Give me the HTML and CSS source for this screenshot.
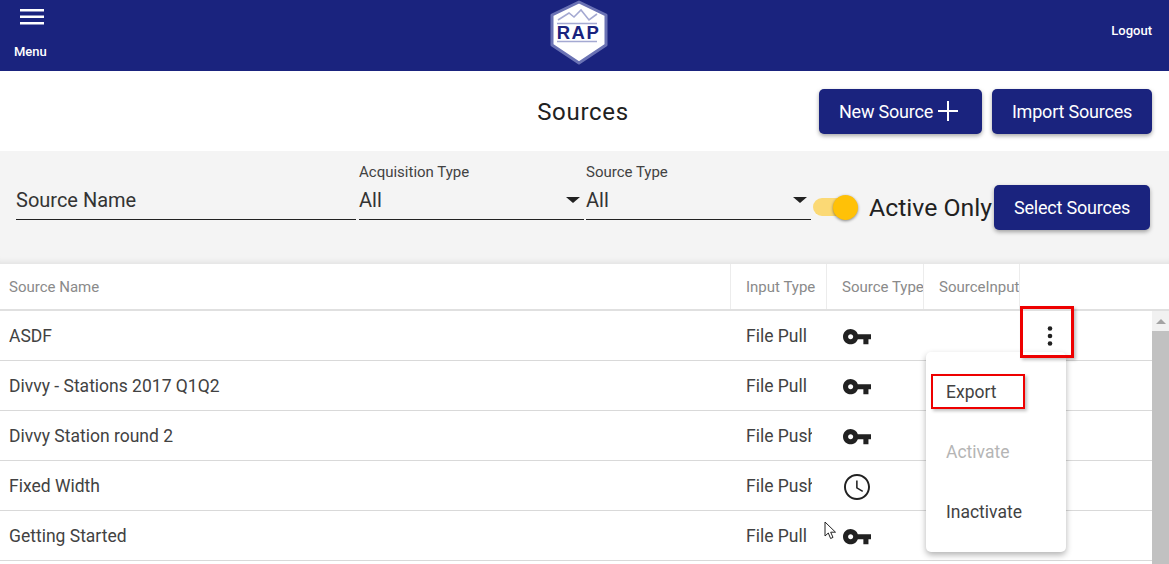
FILE: index.html
```html
<!DOCTYPE html>
<html lang="en">
<head>
    <meta charset="UTF-8">
    <meta name="viewport" content="width=device-width, initial-scale=1.0">
    <title>Sources</title>
    <link rel="stylesheet" href="styles.css">
</head>
<body>
    <header class="topbar">
        <div class="menu-btn">
            <svg class="menu-icon" width="24" height="16" viewBox="0 0 24 16"><path d="M0 0h24v2.500H0zM0 6.500h24V9H0zM0 13h24v2.500H0z" fill="#fff"/></svg>
            <span>Menu</span>
        </div>
        <svg class="logo" width="60" height="66" viewBox="0 0 60 66">
            <path d="M30 2 L57 15 V45 L30 63 L3 45 V15 Z" fill="#fff" stroke="#6a72b4" stroke-width="3" stroke-linejoin="round"/>
            <path d="M9 20 L20 13 L25 17 L32 10 L40 20 L48 14" fill="none" stroke="#a4a9d2" stroke-width="1.6"/>
            <path d="M8 23.500H48M8 41.500H48" stroke="#a4a9d2" stroke-width="1.6"/>
            <text x="29.500" y="38.500" text-anchor="middle" class="logo-text">RAP</text>
        </svg>
        <div class="logout">Logout</div>
    </header>

    <div class="title-row">
        <div></div>
        <h1>Sources</h1>
        <div class="title-actions">
            <button class="btn btn-new">New Source
                <svg width="22" height="22" viewBox="0 0 22 22"><path d="M10 1h2v20h-2zM1 10h20v2H1z" fill="#fff"/></svg>
            </button>
            <button class="btn btn-import">Import Sources</button>
        </div>
    </div>

    <section class="filters">
        <div class="field field-name">
            <div class="field-value">Source Name</div>
        </div>
        <div class="field field-select">
            <label>Acquisition Type</label>
            <div class="field-value">All<i class="caret"></i></div>
        </div>
        <div class="field field-select">
            <label>Source Type</label>
            <div class="field-value">All<i class="caret"></i></div>
        </div>
        <div class="switch"><span class="switch-track"></span><span class="switch-thumb"></span></div>
        <span class="switch-label">Active Only</span>
        <button class="btn btn-select">Select Sources</button>
    </section>

    <section class="grid">
        <div class="grid-head">
            <div class="cell col-name">Source Name</div>
            <div class="cell col-input">Input Type</div>
            <div class="cell col-type">Source Type</div>
            <div class="cell col-si">SourceInput</div>
        </div>
        <div class="grid-main">
            <div class="rows">
                <div class="row">
                    <div class="cell col-name">ASDF</div>
                    <div class="cell col-input"><span class="clip">File Pull</span></div>
                    <div class="cell col-type"><svg class="key" width="28" height="16" viewBox="1 6 22 12.500"><path d="M12.650 10C11.830 7.670 9.610 6 7 6c-3.310 0-6 2.690-6 6s2.690 6 6 6c2.610 0 4.830-1.670 5.650-4H17v4h4v-4h2v-4H12.650zM7 14c-1.100 0-2-.9-2-2s.9-2 2-2 2 .9 2 2-.9 2-2 2z" fill="#212121"/></svg></div>
                    <div class="cell col-si"></div>
                    <div class="cell col-more">
                        <svg width="6" height="20" viewBox="0 0 6 20"><circle cx="3" cy="2.500" r="2.300" fill="#212121"/><circle cx="3" cy="10" r="2.300" fill="#212121"/><circle cx="3" cy="17.500" r="2.300" fill="#212121"/></svg>
                    </div>
                </div>
                <div class="row">
                    <div class="cell col-name">Divvy - Stations 2017 Q1Q2</div>
                    <div class="cell col-input"><span class="clip">File Pull</span></div>
                    <div class="cell col-type"><svg class="key" width="28" height="16" viewBox="1 6 22 12.500"><path d="M12.650 10C11.830 7.670 9.610 6 7 6c-3.310 0-6 2.690-6 6s2.690 6 6 6c2.610 0 4.830-1.670 5.650-4H17v4h4v-4h2v-4H12.650zM7 14c-1.100 0-2-.9-2-2s.9-2 2-2 2 .9 2 2-.9 2-2 2z" fill="#212121"/></svg></div>
                </div>
                <div class="row">
                    <div class="cell col-name">Divvy Station round 2</div>
                    <div class="cell col-input"><span class="clip">File Push</span></div>
                    <div class="cell col-type"><svg class="key" width="28" height="16" viewBox="1 6 22 12.500"><path d="M12.650 10C11.830 7.670 9.610 6 7 6c-3.310 0-6 2.690-6 6s2.690 6 6 6c2.610 0 4.830-1.670 5.650-4H17v4h4v-4h2v-4H12.650zM7 14c-1.100 0-2-.9-2-2s.9-2 2-2 2 .9 2 2-.9 2-2 2z" fill="#212121"/></svg></div>
                </div>
                <div class="row">
                    <div class="cell col-name">Fixed Width</div>
                    <div class="cell col-input"><span class="clip">File Push</span></div>
                    <div class="cell col-type"><svg class="clock" width="26" height="26" viewBox="2 2 20 20"><path d="M11.990 2C6.470 2 2 6.480 2 12s4.470 10 9.990 10C17.520 22 22 17.520 22 12S17.520 2 11.990 2zM12 20.500c-4.700 0-8.500-3.800-8.500-8.500S7.300 3.500 12 3.500s8.500 3.800 8.500 8.500-3.800 8.500-8.500 8.500zM12.500 7H11.300v6l4.800 2.900.6-1-4.200-2.500z" fill="#212121"/></svg></div>
                </div>
                <div class="row">
                    <div class="cell col-name">Getting Started</div>
                    <div class="cell col-input"><span class="clip">File Pull</span></div>
                    <div class="cell col-type"><svg class="key" width="28" height="16" viewBox="1 6 22 12.500"><path d="M12.650 10C11.830 7.670 9.610 6 7 6c-3.310 0-6 2.690-6 6s2.690 6 6 6c2.610 0 4.830-1.670 5.650-4H17v4h4v-4h2v-4H12.650zM7 14c-1.100 0-2-.9-2-2s.9-2 2-2 2 .9 2 2-.9 2-2 2z" fill="#212121"/></svg></div>
                </div>
            </div>
            <div class="scrollbar">
                <div class="scroll-up"><i></i></div>
                <div class="scroll-thumb"></div>
            </div>
        </div>
    </section>

    <div class="row-menu">
        <div class="row-menu-item">Export</div>
        <div class="row-menu-item disabled">Activate</div>
        <div class="row-menu-item">Inactivate</div>
    </div>

    <!-- red marks drawn over the screenshot -->
    <div class="mark mark-more"></div>
    <div class="mark mark-export"></div>

    <svg class="cursor" width="13" height="20" viewBox="0 0 13 20"><path d="M1 1V15L4.300 12 6.600 17.500 9 16.400 6.700 11.200H11.500Z" fill="#fff" stroke="#222" stroke-width="1"/></svg>
</body>
</html>
```

FILE: styles.css
```css
html, body {
    margin: 0;
    padding: 0;
    height: 564px;
    overflow: hidden;
}
body {
    position: relative;
    font-family: Roboto, "Liberation Sans", sans-serif;
    color: #212121;
    background: #fff;
}

/* top bar */
.topbar {
    height: 71px;
    background: #1a237e;
    color: #fff;
    display: flex;
    justify-content: space-between;
    align-items: flex-start;
    padding: 0 17px 0 14px;
    box-sizing: border-box;
    position: relative;
}
.menu-btn {
    width: 58px;
    font-size: 13px;
    font-weight: 500;
    display: flex;
    flex-direction: column;
    padding-top: 9px;
}
.menu-icon {
    margin: 0 0 0 6px;
}
.menu-btn span {
    margin-top: 19px;
}
.logo {
    display: block;
}
.logo-text {
    font-family: "Liberation Sans", sans-serif;
    font-size: 18.500px;
    font-weight: 700;
    letter-spacing: 1.500px;
    fill: #1a237e;
}
.logout {
    width: 66px;
    text-align: right;
    font-size: 13px;
    font-weight: 500;
    padding-top: 23px;
}

/* title row */
.title-row {
    height: 80px;
    display: grid;
    grid-template-columns: 1fr auto 1fr;
    align-items: center;
}
.title-row h1 {
    margin: 0;
    font-size: 24px;
    font-weight: 400;
    letter-spacing: 0.700px;
    padding: 2px 3px 0 0;
}
.title-actions {
    display: flex;
    justify-content: flex-end;
    gap: 10px;
    margin-right: 17px;
}

.btn {
    height: 45px;
    border: none;
    border-radius: 5px;
    background: #1a237e;
    color: #fff;
    font-family: inherit;
    font-size: 18px;
    font-weight: 400;
    letter-spacing: -0.200px;
    box-shadow: 0 2px 4px rgba(0,0,0,0.35);
    display: flex;
    align-items: center;
    justify-content: center;
    padding: 0;
}
.btn-new { width: 163px; gap: 4px; padding-right: 3px; }
.btn-import { width: 160px; }
.btn-select { width: 156px; margin: 34px 0 0 2px; flex: none; }

/* filter strip */
.filters {
    height: 113px;
    background: #f4f4f4;
    display: flex;
    align-items: flex-start;
    padding-left: 16px;
    box-sizing: border-box;
    box-shadow: inset 0 -8px 6px -6px rgba(0,0,0,0.08);
}
.field {
    display: flex;
    flex-direction: column;
    justify-content: flex-end;
    height: 69px;
    flex: none;
}
.field label {
    font-size: 15px;
    line-height: 16px;
    color: #424242;
    margin-bottom: 9px;
}
.field-value {
    position: relative;
    font-size: 20px;
    line-height: 23px;
    color: #333;
    height: 30px;
    border-bottom: 1px solid #212121;
}
.field-name { width: 340px; margin-right: 3px; }
.field-select { width: 225px; margin-right: 2px; }
.caret {
    position: absolute;
    right: 4px;
    top: 8px;
    border-left: 7px solid transparent;
    border-right: 7px solid transparent;
    border-top: 6px solid #212121;
}

.switch {
    position: relative;
    flex: none;
    width: 45px;
    height: 26px;
    margin-top: 43px;
}
.switch-track {
    display: block;
    position: absolute;
    left: 0;
    top: 4px;
    width: 40px;
    height: 18px;
    border-radius: 9px;
    background: #fbd975;
}
.switch-thumb {
    position: absolute;
    right: 0;
    top: 1px;
    width: 25px;
    height: 25px;
    border-radius: 50%;
    background: #ffc107;
    box-shadow: 0 1px 3px rgba(0,0,0,0.45);
}
.switch-label {
    flex: none;
    margin: 41px 0 0 11px;
    font-size: 24.800px;
    line-height: 32px;
    color: #212121;
    width: 123px;
    white-space: nowrap;
}

/* table */
.grid-head {
    display: flex;
    height: 45px;
    border-bottom: 2px solid #e0e0e0;
    font-size: 15px;
    color: #8a8a8a;
}
.grid-head .cell {
    border-right: 1px solid #ececec;
}
.grid-main {
    display: flex;
    height: 253px;
}
.rows {
    flex: 1;
    min-width: 0;
}
.row {
    display: flex;
    height: 50px;
    box-sizing: border-box;
    border-bottom: 1px solid #d9d9d9;
    font-size: 17.500px;
    color: #424242;
    align-items: center;
}
.cell {
    display: flex;
    align-items: center;
    height: 100%;
    white-space: nowrap;
    overflow: hidden;
    flex: none;
    box-sizing: border-box;
}
.col-name { width: 731px; padding-left: 9px; }
.col-input { width: 96px; padding-left: 15px; }
.col-type { width: 97px; padding-left: 15px; }
.col-si { width: 96px; padding-left: 15px; }
.col-more { width: 60px; padding-left: 27px; }
.row .col-type svg { margin-top: 3px; }
.row .col-type .key { margin-left: 1px; }
.row .col-type .clock { margin-left: 2px; }
.clip {
    display: block;
    width: 66px;
    overflow: hidden;
}

.scrollbar {
    width: 17px;
    background: #f1f1f1;
    flex: none;
}
.scroll-up {
    height: 20px;
    display: flex;
    align-items: center;
    justify-content: center;
}
.scroll-up i {
    border-left: 5px solid transparent;
    border-right: 5px solid transparent;
    border-bottom: 5px solid #a3a3a3;
}
.scroll-thumb {
    height: 233px;
    background: #c1c1c1;
}

/* popup menu on the first row */
.row-menu {
    position: absolute;
    left: 926px;
    top: 352px;
    width: 140px;
    height: 200px;
    background: #fff;
    border-radius: 5px;
    box-shadow: 0 3px 6px rgba(0,0,0,0.3);
    padding-top: 10px;
    box-sizing: border-box;
}
.row-menu-item {
    height: 60px;
    line-height: 60px;
    padding-left: 20px;
    font-size: 17.500px;
    color: #424242;
}
.row-menu-item.disabled {
    color: #b5b5b5;
}

.mark {
    position: absolute;
    border: 3px solid #ee0000;
    box-sizing: border-box;
    box-shadow: 2px 2px 3px rgba(0,0,0,0.25);
}
.mark-more {
    left: 1020px;
    top: 306px;
    width: 54px;
    height: 52px;
}
.mark-export {
    left: 931px;
    top: 374px;
    width: 94px;
    height: 35px;
    border-width: 2px;
}
.cursor {
    position: absolute;
    left: 824px;
    top: 521px;
}
```
